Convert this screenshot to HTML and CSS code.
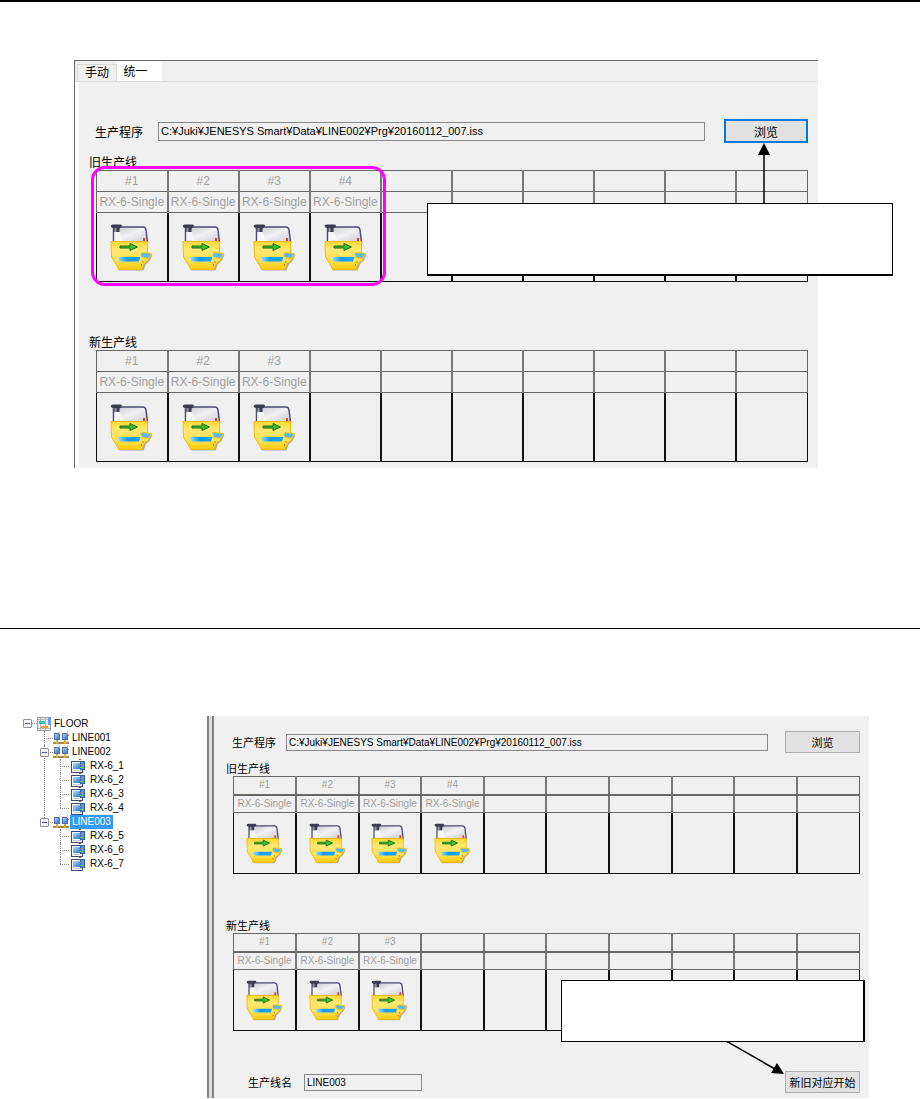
FILE: index.html
```html
<!DOCTYPE html>
<html lang="zh-CN">
<head>
  <meta charset="UTF-8">
  <meta name="viewport" content="width=device-width, initial-scale=1.0">
  <title>生产线</title>
  <link rel="stylesheet" href="styles.css">
</head>
<body>
  <!-- Shared icons -->
  <svg class="symbols" aria-hidden="true">
    <defs>
      <linearGradient id="yellow" x1="0" y1="0" x2="0" y2="1">
        <stop offset="0" stop-color="#ffd92e"/>
        <stop offset="0.3" stop-color="#ffe873"/>
        <stop offset="0.7" stop-color="#ffe050"/>
        <stop offset="1" stop-color="#ffc908"/>
      </linearGradient>
      <linearGradient id="glass" x1="0" y1="0" x2="1" y2="1">
        <stop offset="0" stop-color="#c4c4cc"/>
        <stop offset="0.5" stop-color="#f2f2f5"/>
        <stop offset="1" stop-color="#c8c8d2"/>
      </linearGradient>
      <linearGradient id="blue" x1="0" y1="0" x2="1" y2="0">
        <stop offset="0" stop-color="#9fe0fc"/>
        <stop offset="0.4" stop-color="#0a9bf5"/>
        <stop offset="1" stop-color="#19a5ff"/>
      </linearGradient>
      <linearGradient id="screen" x1="0" y1="0" x2="1" y2="1">
        <stop offset="0" stop-color="#b4e2fd"/>
        <stop offset="1" stop-color="#1668d8"/>
      </linearGradient>
    </defs>
    <symbol id="machine" viewBox="0 0 43 47">
      <path d="M3 34L9.500 46.500H33.500L36 40L39.500 37L42.500 31Z" fill="#808080" opacity="0.6"/>
      <path d="M3.500 18V5Q3.500 3 6 3H33Q35.500 3 36 6L37.500 18Z" fill="url(#glass)" stroke="#4b4b73" stroke-width="1.500"/>
      <path d="M4.500 17V8H10L13 17Z" fill="#f6f6f8"/>
      <path d="M0.500 2Q1 0.500 3 0.500H11Q12.500 1 11.500 3L9.500 4.500V8H4V4.500L1.500 3.500Z" fill="#3c3c50"/>
      <rect x="4.500" y="4" width="2" height="4" fill="#999"/>
      <path d="M1 17.500H37.500V29L41.500 30L38 37L34.500 39L32 45.500H8.500L7 42L1.500 33Z" fill="url(#yellow)" stroke="#f0b808"/>
      <rect x="33" y="14" width="2" height="3" fill="#e5401c"/>
      <path d="M10 22H20V19.500L27.500 23L20 26.500V24H10Z" fill="#3cc026" stroke="#17701b"/>
      <path d="M8 33H30.500L29 37.500H9Z" fill="url(#blue)"/>
      <path d="M30.500 30L32.500 28.500L41.500 29.500L38.500 34.500L32 33.500Z" fill="#54baf4" stroke="#ffc81a"/>
      <path d="M32.500 38H33.500M31 41H32" stroke="#9c6b00" stroke-width="1.500"/>
    </symbol>
    <symbol id="floor" viewBox="0 0 14 14">
      <path d="M0.500 0.500H13.500V13.500H0.500Z" fill="#f3f3f3" stroke="#999"/>
      <path d="M1 2.500H13M1 11.500H13M3.500 1V13M8.500 1V13" stroke="#b5b5bd"/>
      <path d="M2 4H8V7H2Z" fill="#3bbfd8"/>
      <path d="M11 0H14V8H11Z" fill="#6d9af0"/>
      <path d="M4 9H11V11H4Z" fill="#ff9933"/>
    </symbol>
    <symbol id="line" viewBox="0 0 16 14">
      <path d="M0 12H16" stroke="#a58a4a" stroke-width="2"/>
      <path d="M4 9V13M12 9V13" stroke="#e0ae2c" stroke-width="2"/>
      <rect x="1.500" y="2.500" width="5" height="6" fill="url(#screen)" stroke="#5a6aa4"/>
      <rect x="9.500" y="2.500" width="5" height="6" fill="url(#screen)" stroke="#5a6aa4"/>
      <path d="M6.500 0V3M14.500 0V3" stroke="#f3c44a"/>
      <path d="M14 4.500H16" stroke="#e44b2a"/>
    </symbol>
    <symbol id="unit" viewBox="0 0 14 14">
      <rect x="0.500" y="2.500" width="11" height="11" fill="#fff" stroke="#3a4878"/>
      <rect x="2" y="4" width="8" height="6" fill="url(#screen)"/>
      <path d="M2 11.500H10" stroke="#c4ccdc"/>
      <rect x="9.500" y="2.500" width="4" height="8" fill="#4a9af0" stroke="#385e9e"/>
      <path d="M8 0.500H10" stroke="#e8331c"/>
      <path d="M9 8.500H12" stroke="#7bd03c"/>
      <path d="M9 5.500H11" stroke="#ff6a3c"/>
    </symbol>
  </svg>

  <!-- Program selection -->
  <section class="step step-select">
    <div class="panel panel-large">
      <div class="tabs" role="tablist">
        <button class="tab" role="tab" type="button">手动</button>
        <button class="tab tab-active" role="tab" type="button" aria-selected="true">统一</button>
      </div>
      <div class="panel-body">
        <div class="field">
          <label for="program-1">生产程序</label>
          <input id="program-1" class="path" type="text" value="C:¥Juki¥JENESYS Smart¥Data¥LINE002¥Prg¥20160112_007.iss" readonly>
          <button class="btn btn-focus" type="button">浏览</button>
        </div>

        <h2 class="line-title">旧生产线</h2>
        <div class="line-wrap">
          <table class="line-table">
            <tr class="numbers"><td>#1</td><td>#2</td><td>#3</td><td>#4</td><td></td><td></td><td></td><td></td><td></td><td></td></tr>
            <tr class="names"><td>RX-6-Single</td><td>RX-6-Single</td><td>RX-6-Single</td><td>RX-6-Single</td><td></td><td></td><td></td><td></td><td></td><td></td></tr>
            <tr class="machines">
              <td><svg class="machine"><use href="#machine"/></svg></td>
              <td><svg class="machine"><use href="#machine"/></svg></td>
              <td><svg class="machine"><use href="#machine"/></svg></td>
              <td><svg class="machine"><use href="#machine"/></svg></td>
              <td></td><td></td><td></td><td></td><td></td><td></td>
            </tr>
          </table>
          <div class="ring"></div>
        </div>

        <h2 class="line-title">新生产线</h2>
        <div class="line-wrap">
          <table class="line-table">
            <tr class="numbers"><td>#1</td><td>#2</td><td>#3</td><td></td><td></td><td></td><td></td><td></td><td></td><td></td></tr>
            <tr class="names"><td>RX-6-Single</td><td>RX-6-Single</td><td>RX-6-Single</td><td></td><td></td><td></td><td></td><td></td><td></td><td></td></tr>
            <tr class="machines">
              <td><svg class="machine"><use href="#machine"/></svg></td>
              <td><svg class="machine"><use href="#machine"/></svg></td>
              <td><svg class="machine"><use href="#machine"/></svg></td>
              <td></td><td></td><td></td><td></td><td></td><td></td><td></td>
            </tr>
          </table>
        </div>
      </div>

      <div class="callout callout-browse"></div>
      <svg class="arrow-up" viewBox="0 0 14 61">
        <path d="M7 10V61" stroke="#000" stroke-width="1.500"/>
        <path d="M7 0L13 12H1Z"/>
      </svg>
    </div>
  </section>

  <!-- Line matching -->
  <section class="step step-match">
    <nav class="tree" aria-label="FLOOR">
      <div class="row row-root"><button class="toggle" type="button" aria-label="FLOOR"></button><svg class="icon"><use href="#floor"/></svg><span>FLOOR</span></div>
      <ul class="lines">
        <li>
          <div class="row"><svg class="icon icon-line"><use href="#line"/></svg><span>LINE001</span></div>
        </li>
        <li>
          <div class="row"><button class="toggle" type="button" aria-label="LINE002"></button><svg class="icon icon-line"><use href="#line"/></svg><span>LINE002</span></div>
          <ul class="units">
            <li><div class="row"><svg class="icon"><use href="#unit"/></svg><span>RX-6_1</span></div></li>
            <li><div class="row"><svg class="icon"><use href="#unit"/></svg><span>RX-6_2</span></div></li>
            <li><div class="row"><svg class="icon"><use href="#unit"/></svg><span>RX-6_3</span></div></li>
            <li><div class="row"><svg class="icon"><use href="#unit"/></svg><span>RX-6_4</span></div></li>
          </ul>
        </li>
        <li>
          <div class="row"><button class="toggle" type="button" aria-label="LINE003"></button><svg class="icon icon-line"><use href="#line"/></svg><span class="selected">LINE003</span></div>
          <ul class="units">
            <li><div class="row"><svg class="icon"><use href="#unit"/></svg><span>RX-6_5</span></div></li>
            <li><div class="row"><svg class="icon"><use href="#unit"/></svg><span>RX-6_6</span></div></li>
            <li><div class="row"><svg class="icon"><use href="#unit"/></svg><span>RX-6_7</span></div></li>
          </ul>
        </li>
      </ul>
    </nav>
    <div class="splitter"></div>

    <div class="panel panel-small">
      <div class="field">
        <label for="program-2">生产程序</label>
        <input id="program-2" class="path" type="text" value="C:¥Juki¥JENESYS Smart¥Data¥LINE002¥Prg¥20160112_007.iss" readonly>
        <button class="btn" type="button">浏览</button>
      </div>

      <h2 class="line-title">旧生产线</h2>
      <div class="line-wrap">
        <table class="line-table">
          <tr class="numbers"><td>#1</td><td>#2</td><td>#3</td><td>#4</td><td></td><td></td><td></td><td></td><td></td><td></td></tr>
          <tr class="names"><td>RX-6-Single</td><td>RX-6-Single</td><td>RX-6-Single</td><td>RX-6-Single</td><td></td><td></td><td></td><td></td><td></td><td></td></tr>
          <tr class="machines">
            <td><svg class="machine"><use href="#machine"/></svg></td>
            <td><svg class="machine"><use href="#machine"/></svg></td>
            <td><svg class="machine"><use href="#machine"/></svg></td>
            <td><svg class="machine"><use href="#machine"/></svg></td>
            <td></td><td></td><td></td><td></td><td></td><td></td>
          </tr>
        </table>
      </div>

      <h2 class="line-title">新生产线</h2>
      <div class="line-wrap">
        <table class="line-table">
          <tr class="numbers"><td>#1</td><td>#2</td><td>#3</td><td></td><td></td><td></td><td></td><td></td><td></td><td></td></tr>
          <tr class="names"><td>RX-6-Single</td><td>RX-6-Single</td><td>RX-6-Single</td><td></td><td></td><td></td><td></td><td></td><td></td><td></td></tr>
          <tr class="machines">
            <td><svg class="machine"><use href="#machine"/></svg></td>
            <td><svg class="machine"><use href="#machine"/></svg></td>
            <td><svg class="machine"><use href="#machine"/></svg></td>
            <td></td><td></td><td></td><td></td><td></td><td></td><td></td>
          </tr>
        </table>
      </div>

      <div class="field field-bottom">
        <label for="line-name">生产线名</label>
        <input id="line-name" class="line-name" type="text" value="LINE003">
        <button class="btn" type="button">新旧对应开始</button>
      </div>

      <div class="callout callout-start"></div>
      <svg class="arrow-down" viewBox="0 0 58 34">
        <path d="M0 0L49 28" stroke="#000" stroke-width="1.500"/>
        <path d="M58 33L45 32L51 22Z"/>
      </svg>
    </div>
  </section>
</body>
</html>
```
FILE: styles.css
```css
* {
  box-sizing: border-box;
}

body {
  margin: 0;
  background: #fff;
  color: #000;
  font-family: "Liberation Sans", "Noto Sans CJK SC", sans-serif;
  font-size: 12px;
}

button,
input {
  font: inherit;
  color: inherit;
}

.symbols {
  position: absolute;
  width: 0;
  height: 0;
}

/* Sections */
.step-select {
  border-top: 2px solid #000;
  padding: 58px 102px 160px 74px;
}

.step-match {
  display: flex;
  border-top: 1px solid #000;
  padding: 87px 51px 0 23px;
}

.panel {
  position: relative;
  background: #f0f0f0;
}

.panel-large {
  border-top: 1px solid #696969;
  border-left: 1px solid #696969;
}

.panel-small {
  flex: 1;
  padding: 15px 9px 5px 8px;
  font-size: 11px;
}

/* Tabs */
.tabs {
  display: flex;
  align-items: flex-end;
  height: 21px;
  padding-left: 2px;
  border-bottom: 1px solid #dcdcdc;
}

.tab {
  width: 40px;
  height: 17px;
  padding: 0;
  border: 1px solid #d9d9d9;
  border-bottom: none;
  background: #f0f0f0;
  line-height: 14px;
}

.tab-active {
  width: 45px;
  height: 20px;
  padding-right: 8px;
  background: #fff;
  border-color: #fff;
}

.panel-body {
  padding: 37px 10px 6px;
  border-left: 4px solid #fff;
}

/* Fields */
.field {
  display: flex;
  align-items: center;
  gap: 15px;
  margin-left: 6px;
}

.field input {
  height: 19px;
  min-width: 0;
  padding: 0 2px;
  border: 1px solid #888;
  background: #f0f0f0;
  font-size: 11px;
}

.field .path {
  flex: 1;
}

.btn {
  width: 84px;
  height: 24px;
  margin-left: 4px;
  padding: 0;
  border: 1px solid #adadad;
  background: #e1e1e1;
  white-space: nowrap;
}

.btn-focus {
  border: 2px solid #0078d7;
}

.panel-small .field {
  gap: 10px;
}

.panel-small .field input {
  height: 17px;
  font-size: 10px;
}

.panel-small .btn {
  width: 75px;
  height: 22px;
  margin-left: 7px;
}

.panel-small .field-bottom {
  margin: 40px 0 0 22px;
}

.field .line-name {
  width: 118px;
  margin-left: 2px;
}

.panel-small .field-bottom .btn {
  margin-left: auto;
}

/* Production lines */
.line-title {
  margin: 13px 0 0;
  font-size: 12px;
  font-weight: normal;
  line-height: 14px;
}

.line-wrap {
  position: relative;
  margin-left: 7px;
}

.line-wrap + .line-title {
  margin-top: 54px;
}

.line-table {
  width: 100%;
  border-collapse: collapse;
  table-layout: fixed;
}

.line-table td {
  padding: 0;
  border: 1px solid #666;
  color: #a0a0a0;
  text-align: center;
  white-space: nowrap;
}

.line-table td + td {
  border-left: 2px solid #777;
}

.numbers td,
.names td {
  height: 21px;
  line-height: 16px;
}

.line-table .machines td {
  height: 69px;
  border-color: #111;
  line-height: 0;
}

.machine {
  width: 43px;
  height: 47px;
}

.panel-small .line-title {
  margin-top: 10px;
  font-size: 11px;
  line-height: 13px;
}

.panel-small .line-wrap + .line-title {
  margin-top: 46px;
}

.panel-small .numbers td,
.panel-small .names td {
  height: 18px;
  font-size: 10px;
  line-height: 14px;
}

.panel-small .numbers td {
  border-bottom: 2px solid #666;
}

.panel-small .machines td {
  height: 61px;
}

.panel-small .machine {
  width: 37px;
  height: 41px;
}

/* Annotations */
.ring {
  position: absolute;
  top: -4px;
  left: -5px;
  width: calc(40% + 10px);
  height: 120px;
  border: 3px solid #f0f;
  border-radius: 14px;
}

.callout {
  position: absolute;
  border: 1px solid #000;
  background: #fff;
}

.callout-browse {
  top: 142px;
  right: -75px;
  width: 466px;
  height: 73px;
  border-bottom-width: 2px;
}

.callout-start {
  top: 264px;
  right: 4px;
  width: 304px;
  height: 62px;
  border-right-width: 2px;
}

.arrow-up {
  position: absolute;
  top: 82px;
  right: 47px;
  width: 14px;
  height: 61px;
}

.arrow-down {
  position: absolute;
  top: 325px;
  right: 85px;
  width: 58px;
  height: 34px;
}

/* Tree */
.tree {
  width: 184px;
  font-size: 10px;
  line-height: 14px;
}

.tree ul {
  margin: 0;
  padding: 0;
  list-style: none;
}

.row {
  position: relative;
  display: flex;
  align-items: center;
  gap: 3px;
  height: 14px;
  padding-left: 9px;
}

.row-root {
  height: 15px;
  padding-left: 14px;
}

.row-root::before {
  content: "";
  position: absolute;
  left: 9px;
  width: 5px;
  border-top: 1px dotted #888;
}

.icon {
  flex: none;
  width: 14px;
  height: 14px;
}

.icon-line {
  width: 16px;
}

.tree .lines {
  margin-left: 21px;
}

.tree .units {
  margin-left: 16px;
}

.units .row {
  gap: 5px;
  padding-left: 11px;
}

.tree li {
  position: relative;
}

.tree li::before {
  content: "";
  position: absolute;
  top: 0;
  bottom: 0;
  border-left: 1px dotted #888;
}

.tree li:last-child::before {
  bottom: auto;
  height: 7px;
}

.tree li::after {
  content: "";
  position: absolute;
  top: 7px;
  left: 0;
  width: 9px;
  border-top: 1px dotted #888;
}

.toggle {
  position: absolute;
  left: -4px;
  z-index: 1;
  width: 9px;
  height: 9px;
  padding: 0;
  border: 1px solid #919191;
  border-radius: 1px;
  background: linear-gradient(#4b63a7, #4b63a7) center / 5px 1px no-repeat #f4f4f4;
}

.row-root .toggle {
  left: 0;
}

.selected {
  margin-left: -2px;
  padding: 0 2px;
  background: #3399ff;
  color: #fff;
}

.splitter {
  width: 11px;
  border-left: 2px solid #808080;
  background: linear-gradient(to right, #dcdcdc 3px, #808080 3px, #808080 5px, #f0f0f0 5px);
}
```
